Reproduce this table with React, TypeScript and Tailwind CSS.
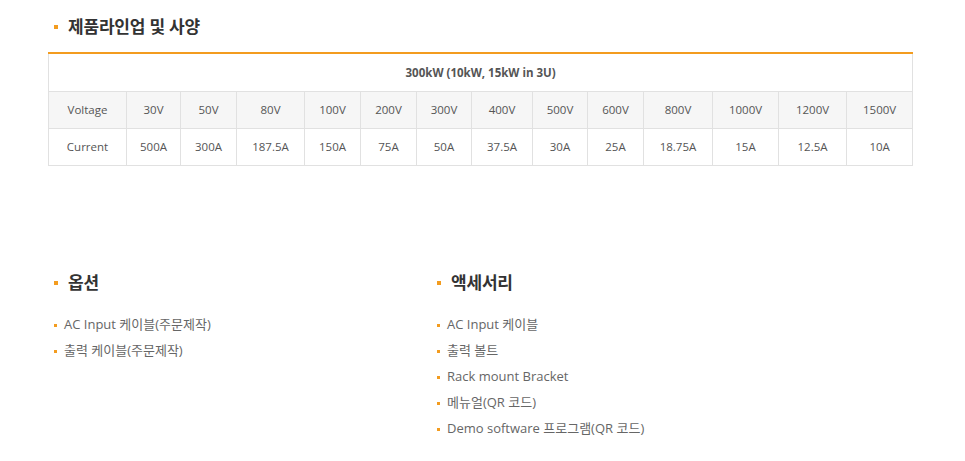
const voltages = ['30V', '50V', '80V', '100V', '200V', '300V', '400V', '500V', '600V', '800V', '1000V', '1200V', '1500V']
const currents = ['500A', '300A', '187.5A', '150A', '75A', '50A', '37.5A', '30A', '25A', '18.75A', '15A', '12.5A', '10A']
const colWidths = ['w-[78px]', 'w-[54px]', 'w-[56px]', 'w-[68px]', 'w-[56px]', 'w-[56px]', 'w-[55px]', 'w-[61px]', 'w-[55px]', 'w-[56px]', 'w-[69px]', 'w-[66px]', 'w-[68px]', 'w-[66px]']

const options = ['AC Input 케이블(주문제작)', '출력 케이블(주문제작)']
const accessories = ['AC Input 케이블', '출력 볼트', 'Rack mount Bracket', '메뉴얼(QR 코드)', 'Demo software 프로그램(QR 코드)']

function Heading({ children }: { children: React.ReactNode }) {
  return (
    <h3 className="flex items-center h-[22px] pl-[6px] text-[17px] font-bold text-[#333] tracking-[-0.2px]">
      <span className="w-[4px] h-[4px] bg-[#f39c1f] mr-[10px]" />
      {children}
    </h3>
  )
}

function BulletList({ items }: { items: string[] }) {
  return (
    <ul className="flex flex-col gap-[7px]">
      {items.map((it) => (
        <li key={it} className="flex items-center h-[19px] pl-[6px] text-[13px] text-[#666]">
          <span className="w-[3px] h-[3px] bg-[#f39c1f] mr-[7px]" />
          {it}
        </li>
      ))}
    </ul>
  )
}

export default function App() {
  return (
    <div className="w-[965px] h-[461px] bg-white pl-[48px] pt-[16px] font-['Open_Sans','Noto_Sans_CJK_KR',sans-serif] overflow-hidden">
      {/* 제품 라인업 */}
      <Heading>제품라인업 및 사양</Heading>

      <table className="mt-[14px] w-[864px] table-fixed border-collapse border-t-2 border-t-[#f39c1f] text-[11.5px] text-[#555]">
        <colgroup>
          {colWidths.map((w, i) => (
            <col key={i} className={w} />
          ))}
        </colgroup>
        <tbody>
          <tr className="h-[38px]">
            <td colSpan={14} className="border border-[#e1e1e1] border-t-0 text-center font-bold text-[#555]">
              300kW (10kW, 15kW in 3U)
            </td>
          </tr>
          <tr className="h-[37px] bg-[#f6f6f6]">
            <td className="border border-[#e1e1e1] text-center">Voltage</td>
            {voltages.map((v) => (
              <td key={v} className="border border-[#e1e1e1] text-center">{v}</td>
            ))}
          </tr>
          <tr className="h-[37px]">
            <td className="border border-[#e1e1e1] text-center">Current</td>
            {currents.map((c) => (
              <td key={c} className="border border-[#e1e1e1] text-center">{c}</td>
            ))}
          </tr>
        </tbody>
      </table>

      {/* 옵션 / 액세서리 */}
      <div className="flex mt-[106px]">
        <div className="w-[383px]">
          <Heading>옵션</Heading>
          <div className="mt-[22px]">
            <BulletList items={options} />
          </div>
        </div>
        <div>
          <Heading>액세서리</Heading>
          <div className="mt-[22px]">
            <BulletList items={accessories} />
          </div>
        </div>
      </div>
    </div>
  )
}
